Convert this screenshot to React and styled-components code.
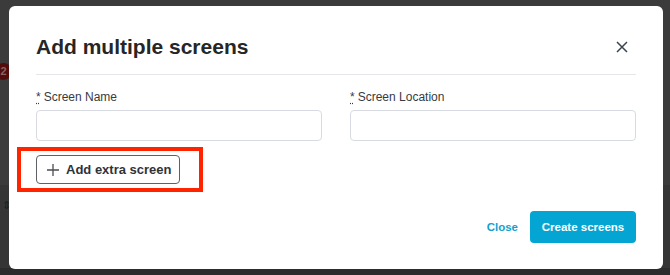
import React from 'react';
import styled, { createGlobalStyle } from 'styled-components';

const GlobalStyle = createGlobalStyle`
  html, body {
    margin: 0;
    padding: 0;
    background: #3a3a3a;
  }
  body {
    font-family: "Liberation Sans", Arial, sans-serif;
  }
`;

const Page = styled.div`
  position: relative;
  width: 670px;
  height: 275px;
  padding: 6px 7px 6px 9px;
  box-sizing: border-box;
  background: linear-gradient(#3b3b3b 0, #3b3b3b 185px, #353535 185px, #353535 268px, #2c2c2c 268px);
  overflow: hidden;
`;

// bits of the app showing behind the overlay
const Badge = styled.span`
  position: absolute;
  left: -5px;
  top: 63px;
  width: 17px;
  height: 17px;
  border-radius: 50%;
  background: #520c0c;
  color: #8a6262;
  font-size: 11px;
  font-weight: 700;
  line-height: 17px;
  text-align: center;
`;

const Sorter = styled.span`
  position: absolute;
  left: 2px;
  top: 199px;
  color: #1c1c1c;
  font-size: 11px;
`;

const Modal = styled.div`
  position: relative;
  width: 654px;
  height: 263px;
  background: #fff;
  border-radius: 6px;
  padding: 29px 27px 26px;
  box-sizing: border-box;
  display: flex;
  flex-direction: column;
`;

const Header = styled.div`
  display: flex;
  align-items: center;
  justify-content: space-between;
  padding-bottom: 15px;
  border-bottom: 1px solid #e4e6ea;
`;

const Title = styled.h2`
  margin: 0;
  font-size: 21px;
  line-height: 24px;
  font-weight: 700;
  color: #262626;
`;

const CloseIcon = styled.button`
  width: 20px;
  height: 20px;
  margin-right: 4px;
  padding: 0;
  border: none;
  background: none;
  display: flex;
  align-items: center;
  justify-content: center;
  color: #3c4450;
  cursor: pointer;
`;

const Fields = styled.div`
  display: grid;
  grid-template-columns: 1fr 1fr;
  gap: 28px;
  margin-top: 14px;
`;

const Field = styled.div`
  display: flex;
  flex-direction: column;
`;

const Label = styled.label`
  font-size: 12px;
  line-height: 16px;
  color: #363b42;
  margin-bottom: 5px;
`;

const Req = styled.span`
  text-decoration: underline dotted;
  text-underline-offset: 2px;
  margin-right: 3px;
`;

const Input = styled.input`
  height: 31px;
  box-sizing: border-box;
  border: 1px solid #d7dbe1;
  border-radius: 4px;
  padding: 0 10px;
  font-family: inherit;
  font-size: 13px;
  outline: none;
`;

const AddRow = styled.div`
  position: relative;
  align-self: flex-start;
  margin-top: 14px;
`;

const Highlight = styled.span`
  position: absolute;
  left: -19px;
  top: -8px;
  right: -23px;
  bottom: -8px;
  border: 4px solid #ff2400;
  pointer-events: none;
`;

const OutlineButton = styled.button`
  display: flex;
  align-items: center;
  gap: 7px;
  width: 144px;
  height: 29px;
  padding: 0 0 0 10px;
  border: 1px solid #5e6166;
  border-radius: 4px;
  background: #fff;
  color: #2f3338;
  font-family: inherit;
  font-size: 13px;
  font-weight: 700;
  white-space: nowrap;
  cursor: pointer;
`;

const Footer = styled.div`
  display: flex;
  justify-content: flex-end;
  align-items: center;
  gap: 12px;
  margin-top: auto;
`;

const LinkButton = styled.button`
  border: none;
  background: none;
  padding: 0;
  color: #149fcf;
  font-family: inherit;
  font-size: 11.5px;
  font-weight: 700;
  cursor: pointer;
`;

const PrimaryButton = styled.button`
  height: 32px;
  width: 106px;
  border: none;
  border-radius: 4px;
  background: #05a5d3;
  color: #fff;
  font-family: inherit;
  font-size: 11.5px;
  font-weight: 700;
  cursor: pointer;
`;

const fields = ['Screen Name', 'Screen Location'];

export default function App() {
  return (
    <>
      <GlobalStyle />
      <Page>
        <Badge>2</Badge>
        <Sorter>⇕</Sorter>
        <Modal>
          <Header>
            <Title>Add multiple screens</Title>
            <CloseIcon aria-label="Close">
              <svg width="12" height="12" viewBox="0 0 12 12" fill="none" stroke="currentColor" strokeWidth="1.5">
                <path d="M1 1l10 10M11 1L1 11" />
              </svg>
            </CloseIcon>
          </Header>

          <Fields>
            {fields.map((name) => (
              <Field key={name}>
                <Label>
                  <Req>*</Req>
                  {name}
                </Label>
                <Input />
              </Field>
            ))}
          </Fields>

          <AddRow>
            <OutlineButton>
              <svg width="12" height="12" viewBox="0 0 12 12" fill="none" stroke="#4a4d52" strokeWidth="1.3">
                <path d="M6 0v12M0 6h12" />
              </svg>
              Add extra screen
            </OutlineButton>
            <Highlight />
          </AddRow>

          <Footer>
            <LinkButton>Close</LinkButton>
            <PrimaryButton>Create screens</PrimaryButton>
          </Footer>
        </Modal>
      </Page>
    </>
  );
}
